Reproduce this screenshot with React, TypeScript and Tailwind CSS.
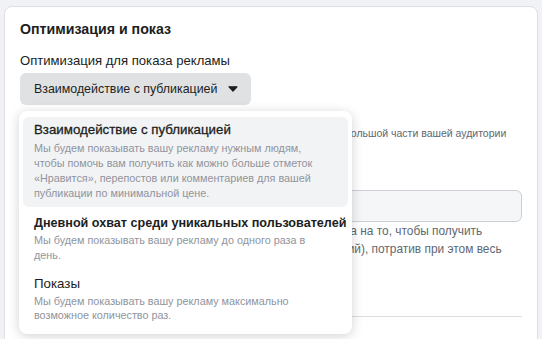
export default function App() {
  return (
    <div className="h-[339px] w-[542px] overflow-hidden bg-[#f0f2f5] px-[4px] pt-[6px] font-[family-name:Liberation_Sans,Arial,sans-serif]">
      <div className="h-[400px] rounded-[8px] border border-[#dddfe2] bg-white px-[15px] pt-[13px]">
        <h2 className="text-[14.2px] font-bold leading-[18px] text-[#1c1e21]">Оптимизация и показ</h2>
        <div className="mt-[14px] text-[13.1px] leading-[18px] text-[#1c1e21]">Оптимизация для показа рекламы</div>
        <div className="relative mt-[3px] w-[231px]">
          <button className="flex h-[32px] w-[231px] items-center whitespace-nowrap rounded-[6px] bg-[#e0e1e3] pl-[14px] pr-[13px] text-[12.4px] text-[#1c1e21]">
            <span>Взаимодействие с публикацией</span>
            <svg className="ml-auto" width="10" height="6" viewBox="0 0 10 6">
              <path d="M1 0.8 H9 L5 5.2 Z" fill="#1c1e21" stroke="#1c1e21" strokeWidth="1.2" strokeLinejoin="round" />
            </svg>
          </button>
          <div className="absolute left-[-1px] top-[38px] z-10 w-[333px] rounded-[8px] bg-white px-[4px] py-[6px] shadow-[0_2px_12px_rgba(0,0,0,0.18)]">
            <div className="flex flex-col gap-[2px]">
              <div className="rounded-[6px] bg-[#f2f3f5] px-[11px] pb-[6px] pt-[3px]">
                <div className="whitespace-nowrap text-[13.3px] leading-[20px] text-[#1c1e21] [-webkit-text-stroke:0.3px_#1c1e21]">
                  Взаимодействие с публикацией
                </div>
                <div className="mt-[1px] max-w-[292px] text-[10.8px] leading-[15px] text-[#90949c]">
                  Мы будем показывать вашу рекламу нужным людям, чтобы помочь вам получить как можно больше отметок
                  «Нравится», перепостов или комментариев для вашей публикации по минимальной цене.
                </div>
              </div>
              <div className="rounded-[6px] px-[11px] pb-[6px] pt-[4px]">
                <div className="whitespace-nowrap text-[12.6px] font-bold leading-[20px] text-[#1c1e21]">
                  Дневной охват среди уникальных пользователей
                </div>
                <div className="max-w-[292px] text-[10.8px] leading-[15px] text-[#90949c]">
                  Мы будем показывать вашу рекламу до одного раза в день.
                </div>
              </div>
              <div className="rounded-[6px] px-[11px] pb-[6px] pt-[3px]">
                <div className="whitespace-nowrap text-[13.3px] leading-[20px] text-[#1c1e21]">Показы</div>
                <div className="max-w-[292px] text-[10.8px] leading-[14px] text-[#90949c]">
                  Мы будем показывать вашу рекламу максимально возможное количество раз.
                </div>
              </div>
            </div>
          </div>
        </div>
        <p className="mt-[20px] whitespace-nowrap text-[10.5px] leading-[16px] text-[#606770]">
          Мы постараемся показывать вашу рекламу быстро, максимально большой части вашей аудитории
        </p>
        <div className="mt-[19px] text-[13.1px] leading-[18px] text-[#1c1e21]">Стоимость за результат</div>
        <div className="mt-[12px] h-[32px] rounded-[6px] border border-[#ccd0d5] bg-[#f5f6f7]" />
        <p className="text-[11.9px] leading-[18px] text-[#606770]">
          Ваша ставка будет рассчитываться автоматически с расчета на то, чтобы получить максимальное количество
          результатов (всех взаимодействий), потратив при этом весь бюджет.
        </p>
        <div className="mt-[40px] border-t border-[#dadde1]" />
      </div>
    </div>
  );
}
